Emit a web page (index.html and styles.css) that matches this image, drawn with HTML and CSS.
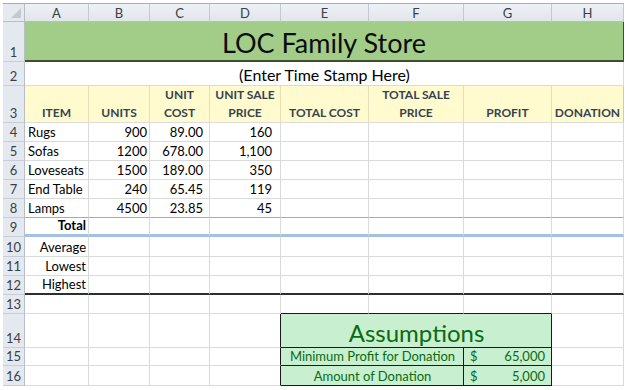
FILE: index.html
```html
<!DOCTYPE html>
<html>
<head>
<meta charset="utf-8">
<link rel="stylesheet" href="styles.css">
</head>
<body>
<div class="sheet">
  <div class="corner"><svg width="12" height="12" viewBox="0 0 12 12"><path d="M11 1 L11 11 L1 11 Z" fill="#c3c9d1"/></svg></div>
  <div class="ch">A</div><div class="ch">B</div><div class="ch">C</div><div class="ch">D</div><div class="ch">E</div><div class="ch">F</div><div class="ch">G</div><div class="ch">H</div>

  <div class="rh">1</div>
  <div class="c title">LOC Family Store</div>

  <div class="rh">2</div>
  <div class="c subtitle">(Enter Time Stamp Here)</div>

  <div class="rh">3</div>
  <div class="c hd">ITEM</div>
  <div class="c hd">UNITS</div>
  <div class="c hd">UNIT<br>COST</div>
  <div class="c hd">UNIT SALE<br>PRICE</div>
  <div class="c hd">TOTAL COST</div>
  <div class="c hd">TOTAL SALE<br>PRICE</div>
  <div class="c hd">PROFIT</div>
  <div class="c hd last">DONATION</div>

  <div class="rh">4</div>
  <div class="c">Rugs</div><div class="c r">900</div><div class="c r p7">89.00</div><div class="c r p8">160</div><div class="c"></div><div class="c"></div><div class="c"></div><div class="c"></div>
  <div class="rh">5</div>
  <div class="c">Sofas</div><div class="c r">1200</div><div class="c r p7">678.00</div><div class="c r p8">1,100</div><div class="c"></div><div class="c"></div><div class="c"></div><div class="c"></div>
  <div class="rh">6</div>
  <div class="c">Loveseats</div><div class="c r">1500</div><div class="c r p7">189.00</div><div class="c r p8">350</div><div class="c"></div><div class="c"></div><div class="c"></div><div class="c"></div>
  <div class="rh">7</div>
  <div class="c">End Table</div><div class="c r">240</div><div class="c r p7">65.45</div><div class="c r p8">119</div><div class="c"></div><div class="c"></div><div class="c"></div><div class="c"></div>
  <div class="rh">8</div>
  <div class="c bt">Lamps</div><div class="c r bt">4500</div><div class="c r p7 bt">23.85</div><div class="c r p8 bt">45</div><div class="c bt"></div><div class="c bt"></div><div class="c bt"></div><div class="c bt"></div>

  <div class="rh">9</div>
  <div class="c r b tk">Total</div><div class="c tk"></div><div class="c tk"></div><div class="c tk"></div><div class="c tk"></div><div class="c tk"></div><div class="c tk"></div><div class="c tk"></div>

  <div class="rh">10</div>
  <div class="c r">Average</div><div class="c"></div><div class="c"></div><div class="c"></div><div class="c"></div><div class="c"></div><div class="c"></div><div class="c"></div>
  <div class="rh">11</div>
  <div class="c r">Lowest</div><div class="c"></div><div class="c"></div><div class="c"></div><div class="c"></div><div class="c"></div><div class="c"></div><div class="c"></div>
  <div class="rh">12</div>
  <div class="c r dk">Highest</div><div class="c dk"></div><div class="c dk"></div><div class="c dk"></div><div class="c dk"></div><div class="c dk"></div><div class="c dk"></div><div class="c dk"></div>

  <div class="rh">13</div>
  <div class="c"></div><div class="c"></div><div class="c"></div><div class="c"></div><div class="c kb"></div><div class="c kb"></div><div class="c kb"></div><div class="c"></div>

  <div class="rh">14</div>
  <div class="c"></div><div class="c"></div><div class="c"></div><div class="c kr"></div>
  <div class="c good atitle">Assumptions</div>
  <div class="c"></div>

  <div class="rh">15</div>
  <div class="c"></div><div class="c"></div><div class="c"></div><div class="c kr"></div>
  <div class="c good lbl">Minimum Profit for Donation</div>
  <div class="c good money"><span>$</span><span>65,000</span></div>
  <div class="c"></div>

  <div class="rh">16</div>
  <div class="c"></div><div class="c"></div><div class="c"></div><div class="c kr"></div>
  <div class="c good lbl">Amount of Donation</div>
  <div class="c good money"><span>$</span><span>5,000</span></div>
  <div class="c"></div>
</div>
</body>
</html>
```
FILE: styles.css
```css
html, body {
  margin: 0;
  padding: 0;
  background: #ffffff;
}
body {
  padding: 3px 0 0 3px;
  font-family: Lato, "Liberation Sans", sans-serif;
  font-size: 13px;
  color: #000;
}
.sheet {
  display: grid;
  grid-template-columns: 22px 64px 61px 60px 71px 88px 95px 88px 72px;
  grid-template-rows: 19px 40px 24px 37px 19px 19px 19px 19px 19px 19px 20px 19px 19px 19px 34px 18px 20px;
  width: 621px;
}
.sheet > div {
  box-sizing: border-box;
}
.corner {
  background: #e6eaef;
  border-top: 1px solid #a7adb5;
  border-right: 1px solid #b7bec8;
  border-bottom: 1px solid #b7bec8;
  display: flex;
  align-items: flex-end;
  justify-content: flex-end;
  padding: 0 2px 2px 0;
}
.ch {
  background: linear-gradient(#eef1f5, #e1e6ec);
  border-top: 1px solid #a7adb5;
  border-right: 1px solid #c2c9d2;
  border-bottom: 1px solid #b7bec8;
  color: #3a3f46;
  font-size: 13px;
  display: flex;
  align-items: center;
  justify-content: center;
  padding-top: 1px;
}
.rh {
  background: #e4e9ef;
  border-right: 1px solid #b7bec8;
  border-bottom: 1px solid #c6cdd6;
  color: #3a3f46;
  font-size: 13px;
  display: flex;
  align-items: flex-end;
  justify-content: center;
  padding-bottom: 1px;
}
.c {
  border-right: 1px solid #dadada;
  border-bottom: 1px solid #dadada;
  display: flex;
  align-items: flex-end;
  padding: 0 2px 1px 3px;
  white-space: nowrap;
  overflow: visible;
}
.r { justify-content: flex-end; }
.p7 { padding-right: 6px; }
.p8 { padding-right: 8px; }
.b { font-weight: 700; }

.title {
  grid-column: 2 / span 8;
  background: #a2cd88;
  border-bottom: 2px solid #3f4d2e;
  border-right: 1px solid #3f4d2e;
  justify-content: center;
  align-items: center;
  font-size: 27px;
  color: #0c0c0c;
  padding: 3px 0 0 0;
}
.subtitle {
  grid-column: 2 / span 8;
  justify-content: center;
  font-size: 16px;
  padding-bottom: 1px;
}
.hd {
  background: #fffbce;
  border-right: 1px solid #e3dfb8;
  border-bottom: 1px solid #dcdcdc;
  color: #344352;
  font-weight: 700;
  font-size: 12px;
  line-height: 18px;
  text-align: center;
  justify-content: center;
  padding: 0;
}
.hd.last { border-right: 1px solid #c8c8c8; }

.bt { border-bottom: 1px solid #8fb0d6; }
.tk { border-bottom: 3px solid #a3c1e3; }
.dk { border-bottom: 2px solid #2e2e2e; }
.kb { border-bottom: 1px solid #1a1a1a; }
.kr { border-right: 1px solid #1a1a1a; }

.good {
  background: #c8efcf;
  color: #0b6a12;
  border-right: 1px solid #1a1a1a;
  border-bottom: 1px solid #1a1a1a;
}
.atitle {
  grid-column: 6 / span 3;
  justify-content: center;
  font-size: 24px;
  padding-bottom: 0;
}
.lbl {
  grid-column: 6 / span 2;
  justify-content: center;
}
.money {
  justify-content: space-between;
  padding: 0 6px 1px 6px;
}
```
